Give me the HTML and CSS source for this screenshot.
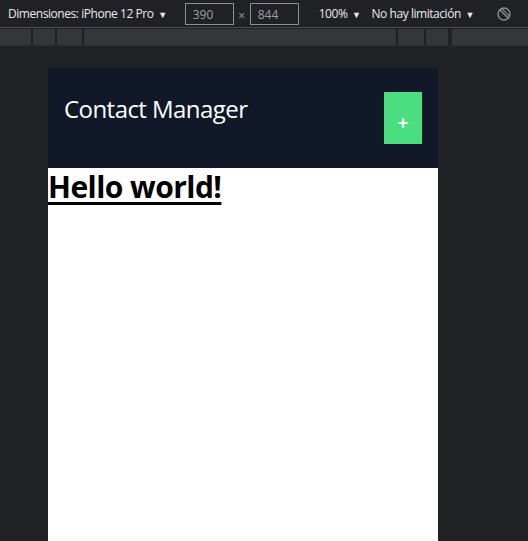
FILE: index.html
```html
<!DOCTYPE html>
<html>
<head>
<meta charset="utf-8">
<link rel="stylesheet" href="styles.css">
</head>
<body>
<div class="toolbar">
  <span class="tb-item">Dimensiones: iPhone 12 Pro <span class="caret">▼</span></span>
  <span class="box box-w">390</span>
  <span class="times">×</span>
  <span class="box box-h">844</span>
  <span class="tb-item zoom">100% <span class="caret">▼</span></span>
  <span class="tb-item throttle">No hay limitación <span class="caret">▼</span></span>
  <svg class="rotate" width="16" height="16" viewBox="0 0 16 16">
    <circle cx="8" cy="8" r="6" fill="none" stroke="#8a8d91" stroke-width="1.4"/>
    <line x1="3.8" y1="3.8" x2="12.2" y2="12.2" stroke="#8a8d91" stroke-width="1.4"/>
    <line x1="5.8" y1="2.6" x2="13.4" y2="10.2" stroke="#8a8d91" stroke-width="1.2"/>
  </svg>
</div>
<div class="divider"></div>
<div class="ruler">
  <span class="seg s1"></span>
  <span class="seg s2"></span>
  <span class="seg s3"></span>
  <span class="seg s4"></span>
  <span class="seg s5"></span>
  <span class="seg s6"></span>
  <span class="seg s7"></span>
</div>
<div class="stage">
  <div class="device">
    <header class="app-header">
      <span class="title">Contact Manager</span>
      <button class="add">+</button>
    </header>
    <main class="content">
      <h1 class="hello">Hello world!</h1>
    </main>
  </div>
</div>
</body>
</html>
```
FILE: styles.css
```css
html, body {
  margin: 0;
  padding: 0;
  background: #202124;
  height: 541px;
  overflow: hidden;
  font-family: "Open Sans", "Noto Sans", sans-serif;
}
.toolbar {
  height: 27px;
  display: flex;
  align-items: center;
  padding-left: 8px;
  color: #e8eaed;
  font-size: 12px;
  background: #202124;
}
.tb-item { white-space: nowrap; letter-spacing: -0.45px; }
.caret { font-size: 9px; margin-left: 2px; }
.box {
  box-sizing: border-box;
  height: 22px;
  border: 1px solid #8a8d91;
  color: #9aa0a6;
  padding: 2px 0 0 7px;
  line-height: 17px;
  font-size: 12px;
}
.box-w { width: 49px; margin-left: 18px; }
.box-h { width: 49px; }
.times { color: #9aa0a6; width: 16px; text-align: center; padding-top: 3px; }
.zoom { margin-left: 20px; }
.throttle { margin-left: 11px; }
.rotate { margin-left: 22px; }
.divider {
  height: 1px;
  background: #4a4c50;
  margin-top: 0;
  border-bottom: 1px solid #202124;
}
.ruler {
  height: 16px;
  background: #35363a;
  display: flex;
  border-bottom: 1px solid #2a2b2e;
}
.seg { height: 16px; border-right: 2px solid #202124; box-sizing: border-box; }
.s1 { width: 33px; }
.s2 { width: 24px; }
.s3 { width: 27px; }
.s4 { width: 314px; }
.s5 { width: 28px; }
.s6 { width: 24px; }
.stage {
  display: flex;
  justify-content: flex-start;
  padding: 22px 0 0 48px;
}
.device {
  width: 390px;
  height: 480px;
  background: #ffffff;
}
.app-header {
  height: 100px;
  background: #111827;
  display: flex;
  justify-content: space-between;
  align-items: flex-start;
  box-sizing: border-box;
  padding: 24px 16px 0 16px;
}
.title {
  color: #ffffff;
  font-size: 24px;
  line-height: 34px;
  letter-spacing: -0.55px;
}
.add {
  width: 38px;
  height: 52px;
  background: #4ade80;
  border: none;
  color: #ffffff;
  font-size: 20px;
  font-weight: 600;
  padding: 8px 0 0 0;
  font-family: "Open Sans", sans-serif;
  margin-right: 0;
}
.content { padding: 0; }
.hello {
  margin: 0;
  font-size: 30px;
  line-height: 38px;
  font-weight: 700;
  text-decoration: underline;
  text-decoration-thickness: 3px;
  text-underline-offset: 4px;
  color: #000;
  letter-spacing: -0.55px;
}
```
